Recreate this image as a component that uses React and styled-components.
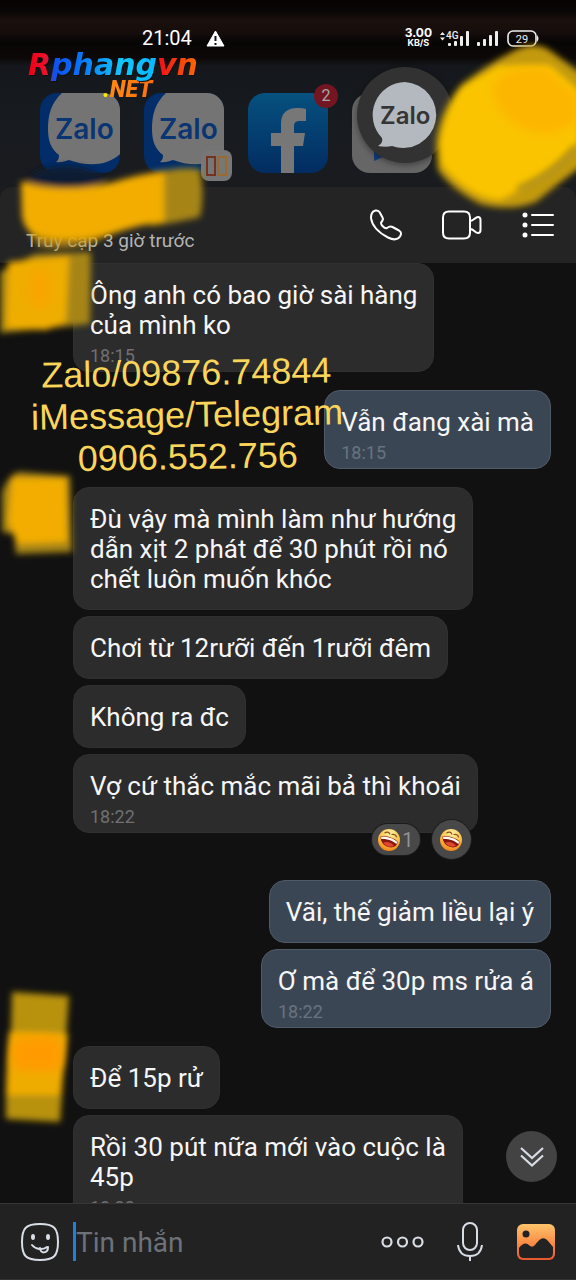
import React from "react";
import styled, { createGlobalStyle } from "styled-components";

const GlobalStyle = createGlobalStyle`
  * { box-sizing: border-box; }
  body { margin: 0; background: #111; color: #fff; font-family: Roboto, "Noto Sans", sans-serif; }
  button { padding: 0; border: 0; background: none; color: inherit; font: inherit; cursor: pointer; }
  svg { display: block; }
`;

const Screen = styled.div`
  position: relative;
  display: flex;
  flex-direction: column;
  height: 100vh;
  overflow: hidden;
`;

const HomeArea = styled.header`
  background: linear-gradient(#060303 0, #0b0606 12px, #1a100d 20px, #160e0c 32px, #070505 42px, #0c0808 58px, #14171b 66px, #181b1f 130px, #191b1f 100%);
`;

const StatusBar = styled.div`
  display: flex;
  align-items: center;
  height: 62px;
  padding: 14px 36px 0 142px;
`;

const Clock = styled.time`
  font-size: 20px;
  line-height: 24px;
  margin-right: 14px;
`;

const StatusRight = styled.div`
  display: flex;
  align-items: center;
  margin-left: auto;
`;

const Speed = styled.div`
  display: flex;
  flex-direction: column;
  align-items: center;
  font-family: Inter, sans-serif;
  font-size: 12px;
  font-weight: 700;
  line-height: 10px;
  margin-right: 6px;
  small { font-size: 9px; line-height: 10px; }
`;

const HomeIcons = styled.div`
  position: relative;
  display: flex;
  gap: 24px;
  padding: 31px 40px 14px;
`;

const AppIcon = styled.button`
  position: relative;
  width: 80px;
  height: 80px;
`;

const Badge = styled.span`
  position: absolute;
  top: -9px;
  right: -10px;
  width: 24px;
  height: 24px;
  border-radius: 50%;
  background: #741622;
  color: #a8a8a8;
  font-size: 16px;
  line-height: 24px;
  text-align: center;
`;

const DualBadge = styled.svg`
  position: absolute;
  right: -8px;
  bottom: -8px;
`;

const ChatHead = styled.button`
  position: absolute;
  top: 5px;
  left: 357px;
  width: 96px;
  height: 96px;
  border-radius: 50%;
  background: #323232;
  box-shadow: 0 2px 6px rgba(0, 0, 0, 0.4);
`;

const ChatHeader = styled.div`
  display: flex;
  align-items: center;
  justify-content: space-between;
  height: 76px;
  padding: 0 21px 0 26px;
  border-radius: 12px 12px 0 0;
  background: #242424;
  box-shadow: 0 0 0 12px #191b1f;
  clip-path: inset(0);
`;

const LastSeen = styled.p`
  align-self: flex-end;
  margin: 0 0 11px;
  color: #b4b4b4;
  font-size: 19px;
  line-height: 22px;
`;

const HeaderActions = styled.div`
  display: flex;
  align-items: center;
  gap: 39px;
`;

const Conversation = styled.main`
  position: relative;
  flex: 1;
  min-height: 0;
  overflow: hidden;
  background: #111;
`;

const MessageList = styled.ol`
  display: flex;
  flex-direction: column;
  gap: 18px;
  margin: 0;
  padding: 0 25px 0 73px;
  list-style: none;
`;

const Group = styled.li`
  display: flex;
  flex-direction: column;
  align-items: ${(p) => (p.$mine ? "flex-end" : "flex-start")};
  gap: 6px;
  padding-bottom: ${(p) => (p.$reacted ? "29px" : "0")};
`;

const Bubble = styled.article`
  position: relative;
  padding: 16px 16px 15px;
  border: 1px solid ${(p) => (p.$mine ? "#505b68" : "#303030")};
  border-radius: 16px;
  background: ${(p) => (p.$mine ? "#3b4654" : "#2c2c2c")};
`;

const Text = styled.p`
  margin: 0;
  color: #f6f6f6;
  font-size: 26px;
  line-height: 30px;
  white-space: pre-line;
`;

const Stamp = styled.time`
  display: block;
  height: 16px;
  color: ${(p) => (p.$mine ? "#687380" : "#707074")};
  font-size: 18px;
  line-height: 32px;
`;

const Reactions = styled.div`
  position: absolute;
  right: 6px;
  bottom: -27px;
  display: flex;
  align-items: center;
  gap: 12px;
`;

const Reaction = styled.button`
  display: flex;
  align-items: center;
  justify-content: center;
  gap: 2px;
  width: ${(p) => (p.$round ? "39px" : "48px")};
  height: ${(p) => (p.$round ? "39px" : "31px")};
  border-radius: 20px;
  background: #484848;
  box-shadow: 0 0 0 1px #1c1c1c;
  color: #929292;
  font-size: 20px;
`;

const JumpButton = styled.button`
  position: absolute;
  right: 19px;
  bottom: 21px;
  display: grid;
  place-items: center;
  width: 51px;
  height: 51px;
  border-radius: 50%;
  background: #434343;
`;

const Composer = styled.form`
  display: flex;
  align-items: center;
  height: 77px;
  padding: 0 20px;
  border-top: 1px solid #363636;
  border-bottom: 1px solid #333;
  background: #222;
`;

const Caret = styled.span`
  width: 3px;
  height: 39px;
  margin-left: 14px;
  background: #1e7fdc;
`;

const MessageInput = styled.input`
  flex: 1;
  min-width: 0;
  padding: 2px 0 0;
  border: 0;
  outline: 0;
  background: none;
  color: #fff;
  font: 28px/34px Roboto, "Noto Sans", sans-serif;
  &::placeholder { color: #6d7178; opacity: 1; }
`;

const ComposerActions = styled.div`
  display: flex;
  align-items: center;
  gap: 33px;
`;

const Watermark = styled.div`
  position: absolute;
  top: 47px;
  left: 28px;
  display: flex;
  flex-direction: column;
`;

const Brand = styled.strong`
  font: italic 700 30px/36px "DejaVu Sans", sans-serif;
  color: transparent;
  background: linear-gradient(90deg, #f00018 0, #f01028 18px, #0f50f0 26px, #0870f8 50px, #10c8ff 94px, #08b8ff 128px, #f01018 131px, #ff7000 172px);
  background-clip: text;
  filter: drop-shadow(1px 1px 0 #101010);
`;

const BrandSuffix = styled.strong`
  margin: -5px 0 0 75px;
  font: italic 900 23px/24px Roboto, sans-serif;
  color: transparent;
  background: linear-gradient(90deg, #ffe800 0, #ffe800 6px, #ff8a10 7px, #ff7010 48px);
  background-clip: text;
`;

const ContactNote = styled.p`
  position: absolute;
  top: 352px;
  left: 31px;
  margin: 0;
  color: #f9d65a;
  font: 36px/42px "Liberation Sans", sans-serif;
  text-align: center;
  white-space: pre-line;
  transform: rotate(-1deg);
`;

const Smears = styled.svg`
  position: absolute;
  top: 0;
  left: 0;
  pointer-events: none;
`;

const line = { fill: "none", stroke: "currentColor", strokeLinecap: "round", strokeLinejoin: "round" };

function ZaloIcon({ dual }) {
  const id = dual ? "zalo-b" : "zalo-a";
  return (
    <AppIcon aria-label="Zalo">
      <svg width="80" height="80" viewBox="0 0 80 80">
        <clipPath id={id}><rect width="80" height="80" rx="17" /></clipPath>
        <g clipPath={`url(#${id})`}>
          <rect width="80" height="80" fill="#022d69" />
          <path d="M22 0C11 10 8 22 8 36c0 12 3 20 11 26 0 4-1 5-3 7 5 1 9-1 13-2 18 7 40 6 52-7V0Z" fill="#747474" />
          <text x="15" y="46" fontFamily="Inter, sans-serif" fontWeight="600" fontSize="28" fill="#0a3573">Zalo</text>
        </g>
      </svg>
      {dual && (
        <DualBadge width="31" height="31" viewBox="0 0 31 31">
          <rect width="31" height="31" rx="8" fill="#777" />
          <path d="M6 7h8v18H6Z" fill="none" stroke="#74321f" strokeWidth="2" />
          <path d="M17 7h8v18h-8Z" fill="none" stroke="#9a6a31" strokeWidth="2" />
        </DualBadge>
      )}
    </AppIcon>
  );
}

function FacebookIcon() {
  return (
    <AppIcon aria-label="Facebook">
      <svg width="80" height="80" viewBox="0 0 80 80">
        <defs>
          <linearGradient id="fb" x2="0" y2="1"><stop stopColor="#06517f" /><stop offset="1" stopColor="#022c61" /></linearGradient>
        </defs>
        <rect width="80" height="80" rx="17" fill="url(#fb)" />
        <path d="M33 80V53H23V40h10V31c0-11 6-16 16-16 4 0 7 0 9 1v12h-6c-5 0-6 2-6 6v6h11l-2 13h-9v27Z" fill="#777" />
      </svg>
      <Badge>2</Badge>
    </AppIcon>
  );
}

function MessengerTile() {
  return (
    <AppIcon aria-label="App">
      <svg width="80" height="80" viewBox="0 0 80 80">
        <rect width="80" height="80" rx="18" fill="#666" />
        <path d="M22 50v18l18-8Z" fill="#123e7a" />
      </svg>
    </AppIcon>
  );
}

function LaughFace() {
  return (
    <svg width="22" height="22" viewBox="0 0 22 22">
      <defs>
        <radialGradient id="face" cx=".55" cy=".2" r=".85"><stop stopColor="#fff0a8" /><stop offset=".55" stopColor="#fdc245" /><stop offset="1" stopColor="#ee7a14" /></radialGradient>
      </defs>
      <circle cx="11" cy="11" r="11" fill="url(#face)" />
      <path d="M2.500 7.500C8 6.500 16 8.500 19.500 12.500 19.500 16.500 16 19 11.500 18.300 6 17.500 2.500 13 2.500 7.500Z" fill="#84170f" />
      <path d="M3 7.800C8 7 15.500 9 19.200 12.800L18.500 15C15 11.800 9 9.800 3.300 10Z" fill="#fff8f0" />
      <path d="M5 13.500C9 12 14 13.500 16 16.800 12.500 19 7.500 17.500 5 13.500Z" fill="#e0452f" />
      <path d="M7 3.800C9 2.500 11 3 11.800 5M14 5.500C16 4.800 18 6 18.500 8" fill="none" stroke="#8a5012" strokeWidth="1.200" strokeLinecap="round" />
    </svg>
  );
}

function StatusIcons() {
  return (
    <svg width="102" height="22" viewBox="0 0 102 22" fill="#eee">
      <path d="M2 8l2.500-3L7 8ZM2 10.500l2.500 3 2.500-3Z" />
      <text x="8" y="12" fontFamily="Roboto, sans-serif" fontSize="10" fontWeight="500">4G</text>
      <rect x="10" y="16" width="3" height="3" rx="1" /><rect x="16" y="14" width="3" height="5" rx="1" />
      <rect x="22" y="9" width="3" height="10" rx="1" /><rect x="28" y="4" width="3" height="15" rx="1" />
      <rect x="39" y="15" width="3" height="4" rx="1" /><rect x="45" y="12" width="3" height="7" rx="1" />
      <rect x="51" y="8" width="3" height="11" rx="1" /><rect x="57" y="4" width="3" height="15" rx="1" />
      <rect x="70" y="4" width="28" height="15" rx="5" fill="none" stroke="#eee" strokeWidth="1.600" />
      <path d="M99 8q3 3.500 0 7Z" />
      <text x="84" y="16" textAnchor="middle" fontFamily="Roboto, sans-serif" fontSize="11">29</text>
    </svg>
  );
}

function YellowSmears() {
  return (
    <Smears width="576" height="1280" viewBox="0 0 576 1280" aria-hidden="true">
      <defs>
        <filter id="soft" x="-20%" y="-20%" width="140%" height="140%"><feGaussianBlur stdDeviation="3" /></filter>
        <filter id="softer" x="-30%" y="-30%" width="160%" height="160%"><feGaussianBlur stdDeviation="5" /></filter>
      </defs>
      <g filter="url(#soft)">
        <path d="M27 182c8-20 60-22 80-2l-30 12Z" fill="#101c30" />
        <path d="M150 174Q180 166 200 169Q205 195 200 217Q180 222 150 226Z" fill="#a68512" />
        <path d="M21 181Q60 194 110 183Q140 174 164 171V222Q140 224 112 234Q75 243 48 239Q24 236 22 215Z" fill="#f2ad04" />
        <path d="M30 232Q60 246 112 234L90 244Q60 252 38 246Z" fill="#c9960a" opacity=".7" />
      </g>
      <g filter="url(#soft)">
        <path d="M436 145Q438 112 462 84Q490 63 510 53Q535 38 552 52L582 74V166Q555 186 536 202Q510 212 480 204Q450 188 438 170Z" fill="#c39a0a" />
        <path d="M440 143Q444 115 460 88L498 66H550L580 92V140Q550 175 500 200Q470 198 442 165Z" fill="#fac404" />
      </g>
      <path d="M492 90Q500 64 545 68L576 95V122Q545 144 515 124Q496 112 492 90Z" fill="#fdb602" filter="url(#softer)" />
      <path d="M518 190Q555 176 576 148" fill="none" stroke="#b99512" strokeWidth="9" filter="url(#soft)" />
      <g filter="url(#soft)">
        <path d="M0 272L35 254 91 252 90 324 50 328 0 333Z" fill="#a68512" />
        <path d="M8 262L69 256 66 322 46 330 6 328Z" fill="#efad04" />
        <path d="M2 492Q10 472 20 472L70 476 72 552 16 554 14 534 2 532Z" fill="#a68512" />
        <path d="M12 478L66 478 67 542 18 544 8 522Z" fill="#f2ad04" />
        <path d="M12 992L69 996 65 1050 60 1122 6 1119Q5 1060 11 1030Z" fill="#b8920a" />
        <path d="M9 1032L68 1034 60 1095 6 1095Z" fill="#efac03" />
      </g>
      <ellipse cx="40" cy="289" rx="12" ry="20" fill="#f8a503" filter="url(#softer)" />
      <rect x="12" y="1037" width="50" height="34" rx="10" fill="#ff9b00" filter="url(#softer)" />
    </Smears>
  );
}

const groups = [
  { items: [{ text: "Ông anh có bao giờ sài hàng\ncủa mình ko", time: "18:15" }] },
  { mine: true, items: [{ text: "Vẫn đang xài mà", time: "18:15" }] },
  {
    reacted: true,
    items: [
      { text: "Đù vậy mà mình làm như hướng\ndẫn xịt 2 phát để 30 phút rồi nó\nchết luôn muốn khóc" },
      { text: "Chơi từ 12rưỡi đến 1rưỡi đêm" },
      { text: "Không ra đc" },
      { text: "Vợ cứ thắc mắc mãi bả thì khoái", time: "18:22", reactions: true },
    ],
  },
  { mine: true, items: [{ text: "Vãi, thế giảm liều lại ý" }, { text: "Ơ mà để 30p ms rửa á", time: "18:22" }] },
  { items: [{ text: "Để 15p rử" }, { text: "Rồi 30 pút nữa mới vào cuộc là\n45p", time: "18:22" }] },
];

export default function App() {
  return (
    <Screen>
      <GlobalStyle />
      <HomeArea>
        <StatusBar>
          <Clock>21:04</Clock>
          <svg width="19" height="17" viewBox="0 0 19 17"><path d="M9.500 1 18 16H1Z" fill="#fff" stroke="#fff" strokeLinejoin="round" /><path d="M9.500 6v5M9.500 13v2" stroke="#111" strokeWidth="2" /></svg>
          <StatusRight>
            <Speed>3.00<small>KB/S</small></Speed>
            <StatusIcons />
          </StatusRight>
        </StatusBar>
        <HomeIcons>
          <ZaloIcon />
          <ZaloIcon dual />
          <FacebookIcon />
          <MessengerTile />
          <ChatHead aria-label="Zalo">
            <svg width="96" height="96" viewBox="0 0 96 96">
              <path d="M48 15a33 33 0 1 1-13 64c-4 1-9 1-14 0 3-2 5-4 4-8A33 33 0 0 1 48 15Z" fill="#b3b9be" />
              <text x="23" y="57" fontFamily="Inter, sans-serif" fontWeight="600" fontSize="24" fill="#353535">Zalo</text>
            </svg>
          </ChatHead>
        </HomeIcons>
      </HomeArea>

      <ChatHeader>
        <LastSeen>Truy cập 3 giờ trước</LastSeen>
        <HeaderActions>
          <button aria-label="Call">
            <svg width="33" height="32" viewBox="0 0 33 32" {...line} strokeWidth="2">
              <path d="M2 4C3.500 1 7.500 .5 9.500 3L12.500 8.500C13.500 10.500 13 11.500 11.500 13 10.500 14 11 15 12 16.500 14 18.500 15 20 17 19 19 17.500 20.500 17 22.500 18L29 21.500C31.500 23 31.500 25 30 27.500 27.500 31 23 31 18 28.500 9.500 24 2 17 1 9 1 7 1.200 5.500 2 4Z" />
            </svg>
          </button>
          <button aria-label="Video call">
            <svg width="40" height="30" viewBox="0 0 40 30" {...line} strokeWidth="2">
              <path d="M7 1.500h15q6 0 6 6V11c4 0 5-4 8-4q2.500 0 2.500 3v10q0 3-2.500 3c-3 0-4-4-8-4v3.500q0 6-6 6H7q-6 0-6-6v-15q0-6 6-6Z" />
              <path d="M28 11v8" />
            </svg>
          </button>
          <button aria-label="Menu">
            <svg width="34" height="26" viewBox="0 0 34 26" {...line} strokeWidth="2">
              <path d="M11 3h21M11 13h21M11 23h21" />
              <g fill="#fff" stroke="none"><circle cx="4" cy="3" r="2.500" /><circle cx="4" cy="13" r="2.500" /><circle cx="4" cy="23" r="2.500" /></g>
            </svg>
          </button>
        </HeaderActions>
      </ChatHeader>

      <Conversation>
        <MessageList>
          {groups.map((g, i) => (
            <Group key={i} $mine={g.mine} $reacted={g.reacted}>
              {g.items.map((m) => (
                <Bubble key={m.text} $mine={g.mine}>
                  <Text>{m.text}</Text>
                  {m.time && <Stamp $mine={g.mine}>{m.time}</Stamp>}
                  {m.reactions && (
                    <Reactions>
                      <Reaction><LaughFace />1</Reaction>
                      <Reaction $round aria-label="React"><LaughFace /></Reaction>
                    </Reactions>
                  )}
                </Bubble>
              ))}
            </Group>
          ))}
        </MessageList>
        <JumpButton aria-label="Newest messages">
          <svg width="24" height="22" viewBox="0 0 24 22" fill="none" stroke="#d8dce4" strokeWidth="2.200"><path d="M1 2l11 10L23 2M1 9.500l11 10 11-10" /></svg>
        </JumpButton>
      </Conversation>

      <Composer onSubmit={(e) => e.preventDefault()}>
        <button type="button" aria-label="Stickers">
          <svg width="39" height="39" viewBox="0 0 39 39" fill="none" stroke="#d9dde6" strokeWidth="2" strokeLinecap="round">
            <path d="M20 2c14 0 18 4 18 18s-4 18-18 18S2 34 2 20 6 2 20 2Z" />
            <path d="M12 23c4 5 11 5 15 2M20 26c0 6 8 6 8-1" />
            <g fill="#d9dde6" stroke="none"><ellipse cx="13" cy="15" rx="2" ry="3" /><ellipse cx="28" cy="15" rx="2" ry="3" /></g>
          </svg>
        </button>
        <Caret />
        <MessageInput aria-label="Tin nhắn" placeholder="Tin nhắn" />
        <ComposerActions>
          <button type="button" aria-label="More">
            <svg width="43" height="12" viewBox="0 0 43 12" fill="none" stroke="#d9dde6" strokeWidth="2.200"><circle cx="6" cy="6" r="4.500" /><circle cx="21.500" cy="6" r="4.500" /><circle cx="37" cy="6" r="4.500" /></svg>
          </button>
          <button type="button" aria-label="Voice">
            <svg width="26" height="39" viewBox="0 0 26 39" fill="none" stroke="#d9dde6" strokeWidth="2"><rect x="6" y="1" width="14" height="27" rx="7" /><path d="M1 23c1 8 5 11 12 11s11-3 12-11M13 34v5" /></svg>
          </button>
          <button type="button" aria-label="Photos">
            <svg width="40" height="38" viewBox="0 0 40 38">
              <defs><linearGradient id="photo" x2="0" y2="1"><stop stopColor="#ffc46b" /><stop offset=".5" stopColor="#fa9048" /><stop offset="1" stopColor="#e9562e" /></linearGradient></defs>
              <rect x="1" y="1" width="38" height="36" rx="6" fill="url(#photo)" />
              <circle cx="10" cy="11" r="3.500" fill="#222" />
              <path d="M3 25c4-5 7-6 11-2 2 1 3 1 5-1 4-5 8-10 13-4l5 6v6q0 5-5 5H8q-5 0-5-5Z" fill="#222" />
            </svg>
          </button>
        </ComposerActions>
      </Composer>

      <YellowSmears />
      <Watermark><Brand>Rphangvn</Brand><BrandSuffix>.NET</BrandSuffix></Watermark>
      <ContactNote>{"Zalo/09876.74844\niMessage/Telegram\n0906.552.756"}</ContactNote>
    </Screen>
  );
}
